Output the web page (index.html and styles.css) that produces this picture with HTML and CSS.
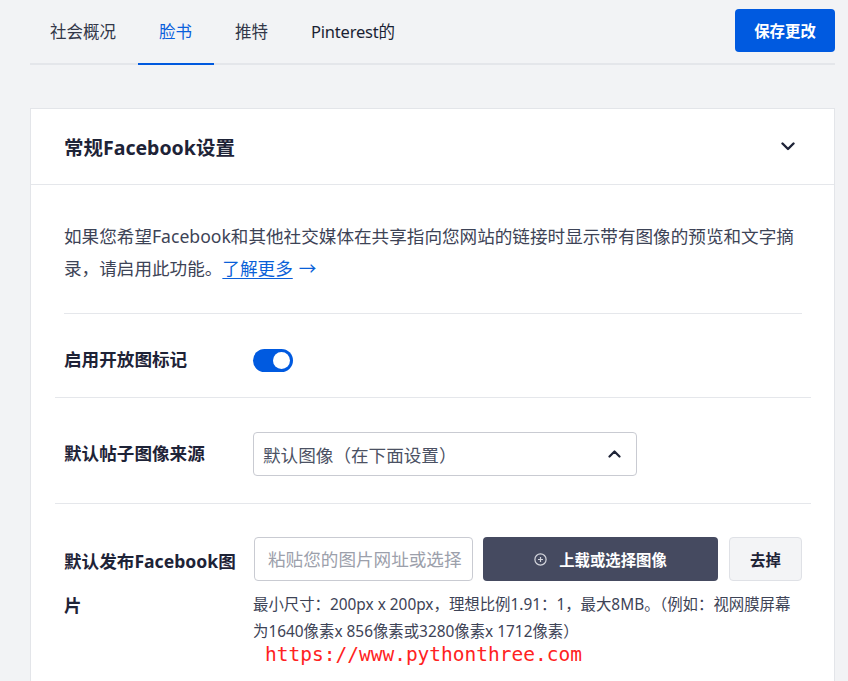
FILE: index.html
```html
<!DOCTYPE html>
<html lang="zh-CN">
<head>
<meta charset="utf-8">
<title>Facebook 设置</title>
<link rel="stylesheet" href="styles.css">
</head>
<body>
<div class="page">
  <header class="topbar">
    <nav class="tabs">
      <a class="tab">社会概况</a>
      <a class="tab tab-active">脸书</a>
      <a class="tab">推特</a>
      <a class="tab tab-dark">Pinterest的</a>
    </nav>
    <button class="btn-save">保存更改</button>
  </header>

  <section class="card">
    <div class="card-head">
      <h2 class="card-title">常规Facebook设置</h2>
      <svg class="chev-down" width="14" height="9" viewBox="0 0 14 9"><polyline points="1.5,1.5 7,7 12.5,1.5" fill="none" stroke="#1e2337" stroke-width="2.4" stroke-linecap="round" stroke-linejoin="round"/></svg>
    </div>
    <div class="card-body">
      <p class="desc">如果您希望Facebook和其他社交媒体在共享指向您网站的链接时显示带有图像的预览和文字摘录，请启用此功能。<a class="link">了解更多</a><span class="arrow">→</span></p>

      <div class="row row-toggle">
        <div class="label">启用开放图标记</div>
        <div class="control">
          <span class="toggle"><span class="knob"></span></span>
        </div>
      </div>

      <div class="row">
        <div class="label">默认帖子图像来源</div>
        <div class="control">
          <div class="select">
            <span>默认图像（在下面设置）</span>
            <svg width="13" height="8" viewBox="0 0 13 8"><polyline points="1.5,6.5 6.5,1.5 11.5,6.5" fill="none" stroke="#1e2337" stroke-width="2.2" stroke-linecap="round" stroke-linejoin="round"/></svg>
          </div>
        </div>
      </div>

      <div class="row row-last">
        <div class="label">默认发布Facebook图片</div>
        <div class="control control-col">
          <div class="upload-line">
            <div class="input">粘贴您的图片网址或选择</div>
            <button class="btn-upload">
              <svg width="13" height="13" viewBox="0 0 13 13"><circle cx="6.5" cy="6.5" r="5.6" fill="none" stroke="#d4d6dd" stroke-width="1.2"/><path d="M6.5 4v5M4 6.5h5" stroke="#d4d6dd" stroke-width="1.2"/></svg>
              <span>上载或选择图像</span>
            </button>
            <button class="btn-remove">去掉</button>
          </div>
          <p class="help">最小尺寸：200px x 200px，理想比例1.91：1，最大8MB。（例如：视网膜屏幕为1640像素x 856像素或3280像素x 1712像素）</p>
        </div>
      </div>
    </div>
  </section>
</div>
<div class="watermark">https://www.pythonthree.com</div>
</body>
</html>
```

FILE: styles.css
```css
* { box-sizing: border-box; }

html, body {
  margin: 0;
  padding: 0;
  background: #f2f3f5;
  height: 100%;
  overflow: hidden;
}

body {
  font-family: "Noto Sans", "Noto Sans CJK SC", sans-serif;
  color: #1e2337;
  position: relative;
}

.page {
  padding: 0 13px 0 30px;
}

.topbar {
  display: flex;
  align-items: center;
  justify-content: space-between;
  height: 65px;
  border-bottom: 2px solid #e4e6ea;
}

.tabs {
  display: flex;
  align-self: stretch;
  margin-left: -1.5px;
}

.tab {
  display: flex;
  align-items: center;
  padding: 0 21.5px 1px;
  font-size: 16.5px;
  color: #323749;
  border-bottom: 2px solid transparent;
  margin-bottom: -2px;
  cursor: pointer;
}

.tab-active {
  color: #0a5fdc;
  border-bottom-color: #0059de;
}

.tab-dark {
  color: #1a1f33;
  letter-spacing: -0.2px;
}

.btn-save {
  margin-top: -2px;
  height: 43px;
  width: 100px;
  border: none;
  border-radius: 4px;
  background: #005ae0;
  color: #fff;
  font-family: inherit;
  font-size: 15.4px;
  font-weight: 700;
}

.card {
  margin-top: 43px;
  background: #fff;
  border: 1px solid #e3e5e9;
  border-bottom: none;
  height: 640px;
}

.card-head {
  display: flex;
  align-items: center;
  justify-content: space-between;
  height: 76px;
  padding: 0 39px 0 33px;
  border-bottom: 1px solid #e5e7eb;
}

.card-title {
  margin: 0;
  font-size: 19.5px;
  font-weight: 700;
  color: #1e2337;
}

.chev-down { margin-top: 0; }

.card-body {
  padding: 36px 32px 0 33px;
}

.desc {
  margin: 0;
  font-size: 17.6px;
  line-height: 31.5px;
  color: #3d4356;
  padding-bottom: 29px;
  border-bottom: 1px solid #e5e7eb;
}

.link {
  color: #0a5fd8;
  text-decoration: underline;
  text-underline-offset: 3px;
}

.arrow {
  margin-left: 6px;
  color: #0a5fd8;
}

.row {
  display: flex;
  align-items: flex-start;
  gap: 9px;
  margin: 0 -9px;
  padding: 33px 9px 27px;
  border-bottom: 1px solid #e5e7eb;
}

.row-toggle {
  padding: 23px 9px 16px;
}

.row-last {
  border-bottom: none;
  padding-top: 33px;
}

.label {
  flex: 0 0 180px;
  font-size: 17.6px;
  font-weight: 700;
  line-height: 44px;
  color: #1e2337;
}

.row-last .label {
  padding-top: 2px;
}

.control {
  flex: 1;
  display: flex;
  align-items: center;
  min-height: 44px;
}

.control-col {
  flex-direction: column;
  align-items: stretch;
}

.toggle {
  position: relative;
  display: inline-block;
  width: 40px;
  height: 23px;
  border-radius: 12px;
  background: #005ae0;
  margin-top: 2px;
}

.knob {
  position: absolute;
  top: 3px;
  right: 3px;
  width: 17px;
  height: 17px;
  border-radius: 50%;
  background: #fff;
}

.select {
  width: 384px;
  height: 44px;
  margin-top: 1px;
  border: 1px solid #c9cbd2;
  border-radius: 4px;
  display: flex;
  align-items: center;
  justify-content: space-between;
  padding: 0 15px 0 9px;
  font-size: 17.6px;
  color: #4b5163;
}

.upload-line {
  display: flex;
  gap: 10px;
  margin-left: 1px;
}

.input {
  flex: 1;
  min-width: 0;
  height: 44px;
  border: 1px solid #c9cbd2;
  border-radius: 4px;
  padding: 0 0 0 13px;
  font-size: 17.6px;
  line-height: 42px;
  color: #9ca0ab;
  white-space: nowrap;
  overflow: hidden;
}

.btn-upload {
  flex: 0 0 235px;
  height: 44px;
  border: none;
  border-radius: 4px;
  background: #454a60;
  color: #fff;
  font-family: inherit;
  font-size: 15.4px;
  font-weight: 700;
  display: flex;
  align-items: center;
  justify-content: center;
  gap: 12px;
}

.btn-remove {
  flex: 0 0 73px;
  height: 44px;
  margin-left: 1px;
  border: 1px solid #dfe1e6;
  border-radius: 4px;
  background: #f3f4f6;
  color: #1e2337;
  font-family: inherit;
  font-size: 15.4px;
  font-weight: 700;
}

.help {
  margin: 10px 0 0;
  font-size: 15.4px;
  line-height: 27px;
  color: #3d4356;
}

.watermark {
  position: absolute;
  left: 265px;
  top: 642px;
  font-family: "DejaVu Sans Mono", "Liberation Mono", monospace;
  font-size: 19.5px;
  line-height: 26px;
  color: #ff2222;
}
```
